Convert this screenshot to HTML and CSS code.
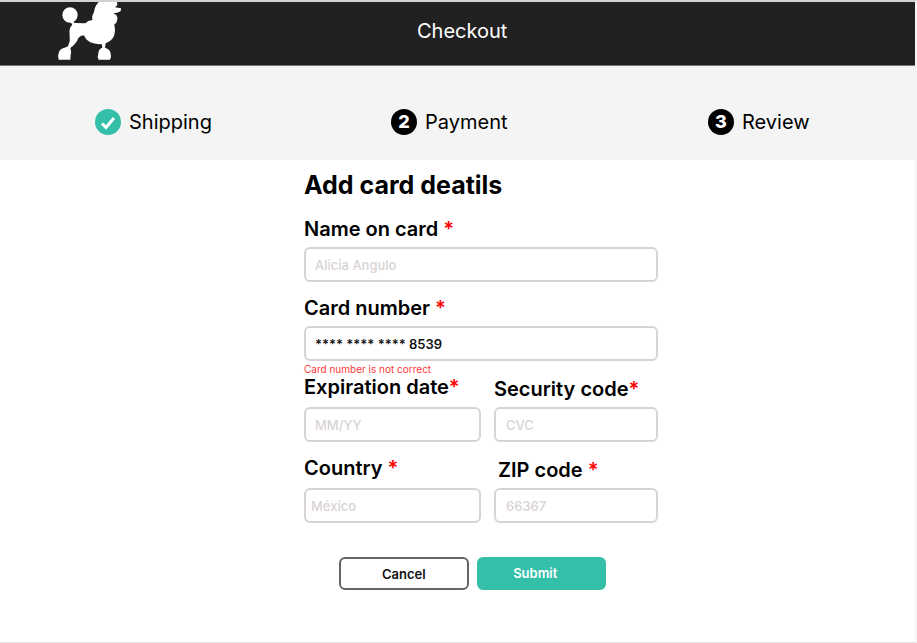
FILE: index.html
```html
<!DOCTYPE html>
<html lang="en">
<head>
<meta charset="utf-8">
<meta name="viewport" content="width=device-width, initial-scale=1">
<title>Checkout</title>
<link rel="stylesheet" href="styles.css">
</head>
<body>
<div class="page">
  <header class="topbar">
    <svg class="logo" viewBox="21 6 195 174" role="img" aria-label="Poodle">
      <path d="M146 6H201L202 15L195 22L213 25Q215 36 201 38L190 40L199 45Q204 52 201 62Q200 71 193 73Q197 90 193 105Q187 122 167 130L165 143Q181 147 182 162Q185 172 180 179H146Q141 171 145 160Q146 146 157 143L155 132Q136 134 121 127Q106 119 102 106Q91 107 85 114Q80 130 61 144Q65 155 62 165L61 179H26Q22 170 26 160Q28 146 44 143L54 139Q62 123 59 107Q56 94 61 82L67 74L62 67L68 64L74 69L106 70Q114 61 127 60Q124 48 132 36Q134 19 146 6Z"/>
      <circle cx="60" cy="45" r="23"/>
    </svg>
    <div class="topbar-title">Checkout</div>
  </header>

  <ol class="steps">
    <li class="step">
      <svg class="badge badge-done" viewBox="0 0 26 26" aria-hidden="true"><path d="M7 14.5L11 18.5L19 9"/></svg>
      Shipping
    </li>
    <li class="step"><span class="badge">2</span>Payment</li>
    <li class="step"><span class="badge">3</span>Review</li>
  </ol>

  <main class="content">
    <form class="card-form">
      <h1>Add card deatils</h1>
      <div class="field">
        <label for="name">Name on card <span class="required">*</span></label>
        <input id="name" type="text" placeholder="Alicia Angulo">
      </div>
      <div class="field">
        <label for="number">Card number <span class="required">*</span></label>
        <input id="number" type="text" value="**** **** **** 8539" aria-describedby="number-error">
      </div>
      <p class="error" id="number-error">Card number is not correct</p>
      <div class="pairs">
        <div class="field field-start">
          <label for="expiry">Expiration date<span class="required">*</span></label>
          <input id="expiry" type="text" placeholder="MM/YY">
        </div>
        <div class="field field-end">
          <label for="cvc">Security code<span class="required">*</span></label>
          <input id="cvc" type="text" placeholder="CVC">
        </div>
        <div class="field field-start field-tight">
          <label for="country">Country <span class="required">*</span></label>
          <input id="country" type="text" placeholder="México">
        </div>
        <div class="field field-end field-inset">
          <label for="zip">ZIP code <span class="required">*</span></label>
          <input id="zip" type="text" placeholder="66367">
        </div>
      </div>
      <div class="actions">
        <button class="button" type="button">Cancel</button>
        <button class="button button-primary" type="submit">Submit</button>
      </div>
    </form>
  </main>
</div>
</body>
</html>
```
FILE: styles.css
```css
* {
  box-sizing: border-box;
}

body {
  margin: 0;
  font-family: Inter, "Liberation Sans", sans-serif;
  color: #000;
  background: #fff;
}

.page {
  min-height: 100vh;
  border-top: 2px solid #d0d3d3;
  border-right: 2px solid #f4f4f4;
  border-bottom: 1px solid #e4e4e4;
}

.topbar {
  display: grid;
  grid-template-columns: 417fr 498fr;
  height: 64px;
  background: #212121;
  border-bottom: 1px solid #777;
}

.logo {
  width: 65px;
  height: 58px;
  margin-left: 57px;
  fill: #fff;
}

.topbar-title {
  color: #fff;
  font-size: 20px;
  line-height: 58px;
}

.steps {
  display: grid;
  grid-template-columns: 296fr 317fr 209fr;
  align-items: center;
  height: 94px;
  margin: 0 -2px 0 0;
  padding: 18px 0 0 95px;
  list-style: none;
  background: #f4f4f4;
}

.step {
  display: flex;
  align-items: center;
  gap: 8px;
  font-size: 20px;
  line-height: 28px;
}

.badge {
  flex: none;
  width: 26px;
  height: 26px;
  border-radius: 50%;
  background: #000;
  color: #fff;
  font-size: 18px;
  font-weight: 800;
  line-height: 26px;
  text-align: center;
}

.badge-done {
  background: #34bfa8;
  fill: none;
  stroke: #fff;
  stroke-width: 3;
}

.content {
  display: grid;
  grid-template-columns: 304fr 354px 257fr;
}

.card-form {
  grid-column: 2;
  padding: 9px 0 48px;
}

h1 {
  margin: 0 0 16px;
  font-size: 25px;
  font-weight: 700;
  line-height: 32px;
}

.field {
  display: flex;
  flex-direction: column;
  gap: 6px;
}

.field + .field {
  margin-top: 14px;
}

label {
  font-size: 20px;
  font-weight: 600;
  line-height: 24px;
  white-space: nowrap;
}

.required {
  color: #f00;
}

input {
  width: 100%;
  height: 35px;
  padding: 0 9px;
  border: 2px solid #d9d3d5;
  border-radius: 6px;
  background: #fff;
  color: #111;
  font: 600 13px/16px Inter, "Liberation Sans", sans-serif;
}

input::placeholder {
  color: #d9d3d5;
  font-weight: 500;
  opacity: 1;
}

.error {
  margin: 2px 0 0;
  color: #ff3838;
  font-size: 10px;
  line-height: 12px;
}

.pairs {
  display: grid;
  grid-template-columns: 177fr 164fr;
  gap: 14px 13px;
  align-items: end;
}

.pairs .field {
  margin: 0;
}

.pairs .field-start {
  gap: 8px;
}

.field-end input {
  padding: 1px 10px 0;
}

.field-tight input {
  padding: 0 5px;
}

.field-inset label {
  padding-left: 4px;
}

.actions {
  display: grid;
  grid-template-columns: 1fr 1fr;
  gap: 8px;
  margin: 34px 52px 0 35px;
}

.button {
  height: 33px;
  padding: 0;
  border: 2px solid #666;
  border-radius: 6px;
  background: #fff;
  color: #111;
  font: 600 13px/16px Inter, "Liberation Sans", sans-serif;
}

.button-primary {
  padding: 0 12px 2px 0;
  border-color: #34bfa8;
  background: #34bfa8;
  color: #fff;
}
```
